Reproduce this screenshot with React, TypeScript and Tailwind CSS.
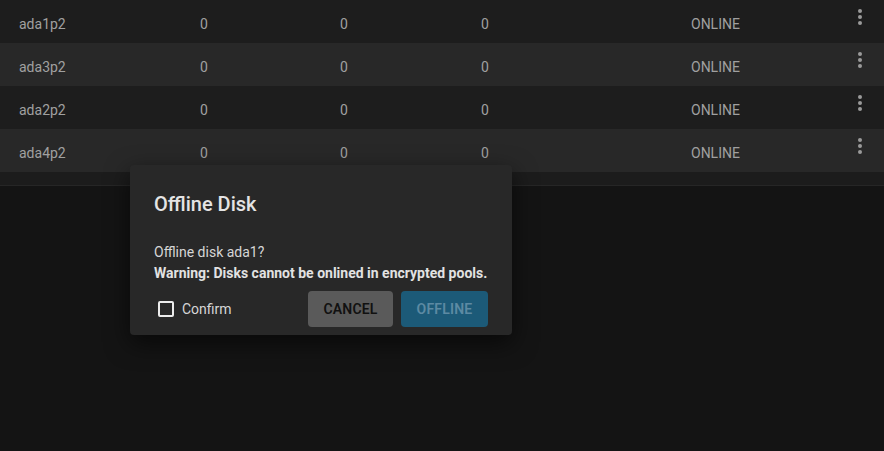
import React from 'react';

const disks = ['ada1p2', 'ada3p2', 'ada2p2', 'ada4p2'];

const MoreVert: React.FC = () => (
  <svg width="24" height="24" viewBox="0 0 24 24" fill="#9a9a9a">
    <circle cx="12" cy="6" r="2" />
    <circle cx="12" cy="12" r="2" />
    <circle cx="12" cy="18" r="2" />
  </svg>
);

const App: React.FC = () => {
  return (
    <div className="relative w-[884px] h-[451px] overflow-hidden bg-[#141414] text-[14px]" style={{ fontFamily: 'Roboto, "Noto Sans", sans-serif' }}>
      {/* Disk table */}
      <div className="flex flex-col">
        {disks.map((name, i) => (
          <div
            key={name}
            className={`grid grid-cols-[181px_140px_141px_210px_1fr_auto] pl-[19px] h-[43px] text-[#a0a0a0] ${i % 2 === 0 ? 'bg-[#1d1d1d]' : 'bg-[#282828]'}`}
          >
            <div className="pt-[14px]">{name}</div>
            <div className="pt-[14px]">0</div>
            <div className="pt-[14px]">0</div>
            <div className="pt-[14px]">0</div>
            <div className="pt-[14px]">ONLINE</div>
            <div className="pr-[12px] pt-[5px]">
              <MoreVert />
            </div>
          </div>
        ))}
        <div className="h-[14px] bg-[#1c1c1c] border-b border-[#262626]" />
      </div>

      {/* Offline dialog */}
      <div className="absolute left-[130px] top-[165px] w-[382px] rounded bg-[#282828] px-6 pt-[25px] pb-[8px] shadow-[0_8px_24px_rgba(0,0,0,0.6)]">
        <h2 className="text-[20px] font-medium text-[#e4e4e4] leading-[28px]">Offline Disk</h2>
        <div className="mt-[24px] text-[#d6d6d6] leading-[21px]">
          <p>Offline disk ada1?</p>
          <p className="font-bold text-[#e2e2e2]">Warning: Disks cannot be onlined in encrypted pools.</p>
        </div>
        <div className="mt-[7px] flex items-center">
          <label className="flex items-center gap-[8px] text-[#d6d6d6] pl-[4px]">
            <span className="w-[16px] h-[16px] border-2 border-[#ececec] rounded-[2px]" />
            Confirm
          </label>
          <div className="ml-auto flex gap-[8px]">
            <button className="h-[36px] w-[85px] rounded bg-[#5a5a5a] text-[#111111] font-semibold tracking-[0.2px]">CANCEL</button>
            <button className="h-[36px] w-[87px] rounded bg-[#1c5a78] text-[#5d8aa3] font-semibold tracking-[0.2px]">OFFLINE</button>
          </div>
        </div>
      </div>
    </div>
  );
};

export default App;
